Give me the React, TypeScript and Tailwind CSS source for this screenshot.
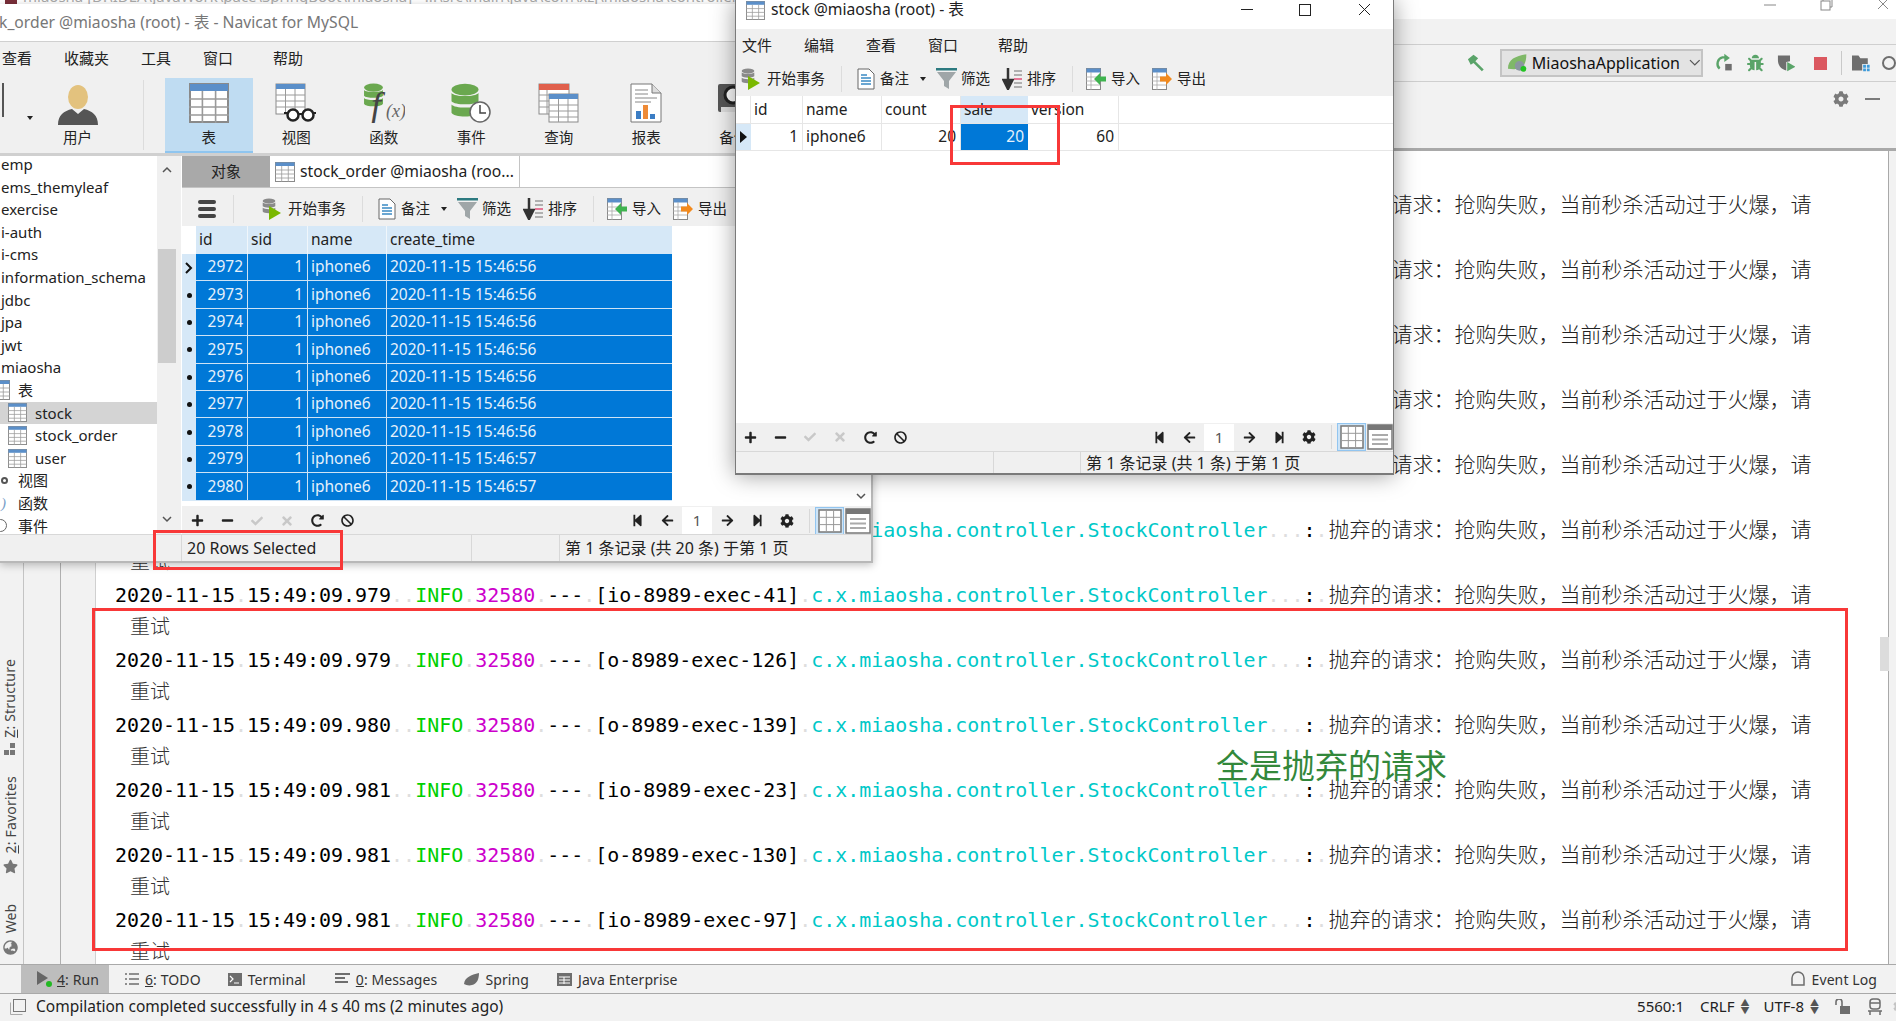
import React from "react";
import {
  FaPlus,
  FaMinus,
  FaCheck,
  FaTimes,
  FaRedoAlt,
  FaBan,
  FaStepBackward,
  FaStepForward,
  FaArrowLeft,
  FaArrowRight,
  FaCog,
  FaStar,
  FaGlobeAsia,
  FaBug,
} from "react-icons/fa";

const logs = [
  ["15:49:09.978", "[io-8989-exec-52]"],
  ["15:49:09.978", "[io-8989-exec-60]"],
  ["15:49:09.978", "[io-8989-exec-77]"],
  ["15:49:09.979", "[o-8989-exec-101]"],
  ["15:49:09.979", "[io-8989-exec-18]"],
  ["15:49:09.979", "[io-8989-exec-33]"],
  ["15:49:09.979", "[io-8989-exec-41]"],
  ["15:49:09.979", "[o-8989-exec-126]"],
  ["15:49:09.980", "[o-8989-exec-139]"],
  ["15:49:09.981", "[io-8989-exec-23]"],
  ["15:49:09.981", "[o-8989-exec-130]"],
  ["15:49:09.981", "[io-8989-exec-97]"],
];

const orders = [
  ["2972", "2020-11-15 15:46:56"],
  ["2973", "2020-11-15 15:46:56"],
  ["2974", "2020-11-15 15:46:56"],
  ["2975", "2020-11-15 15:46:56"],
  ["2976", "2020-11-15 15:46:56"],
  ["2977", "2020-11-15 15:46:56"],
  ["2978", "2020-11-15 15:46:56"],
  ["2979", "2020-11-15 15:46:57"],
  ["2980", "2020-11-15 15:46:57"],
];

const treeTop = ["emp", "ems_themyleaf", "exercise", "i-auth", "i-cms", "information_schema", "jdbc", "jpa", "jwt", "miaosha"];

function GridIcon({ size = 20, top = "#5b8fc9" }: { size?: number; top?: string }) {
  return (
    <svg width={size} height={size} viewBox="0 0 20 20" className="shrink-0">
      <rect x="0.5" y="0.5" width="19" height="19" fill="#fff" stroke="#8a8a8a" />
      <rect x="0.5" y="0.5" width="19" height="3.5" fill={top} />
      <path d="M0 8h20M0 12h20M0 16h20M6.7 4v16M13.3 4v16" stroke="#9a9a9a" strokeWidth="0.8" />
    </svg>
  );
}

function DbStack({ color = "#6aa84f" }: { color?: string }) {
  return (
    <g fill={color}>
      <ellipse cx="10" cy="4" rx="9" ry="3.5" />
      <path d="M1 6c2 2.5 16 2.5 18 0v5c-2 2.5-16 2.5-18 0zM1 13c2 2.5 16 2.5 18 0v5c-1 3-17 3-18 0z" />
    </g>
  );
}

function ViewIcon() {
  return (
    <svg width="42" height="40" viewBox="0 0 42 40">
      <rect x="1" y="1" width="29" height="30" fill="#fff" stroke="#8a8a8a" />
      <rect x="1" y="1" width="29" height="5" fill="#5b8fc9" />
      <path d="M1 12h29M1 18h29M1 24h29M10.500 6v25M20 6v25" stroke="#9a9a9a" />
      <circle cx="18" cy="32" r="5.5" fill="#fff" stroke="#222" strokeWidth="2.500" />
      <circle cx="33" cy="32" r="5.500" fill="#fff" stroke="#222" strokeWidth="2.500" />
      <path d="M23 31h5M9 30l4 0M38 30l3 0" stroke="#222" strokeWidth="2" />
    </svg>
  );
}

function FuncIcon() {
  return (
    <svg width="42" height="40" viewBox="0 0 42 40">
      <g transform="scale(1.05 1.15)">
        <DbStack />
      </g>
      <text x="8" y="34" fontFamily="'Liberation Serif', serif" fontStyle="italic" fontSize="36" fill="#444">f</text>
      <text x="23" y="34" fontFamily="'Liberation Serif', serif" fontStyle="italic" fontSize="18" fill="#666">(x)</text>
    </svg>
  );
}

function EventIcon() {
  return (
    <svg width="42" height="40" viewBox="0 0 42 40">
      <g transform="scale(1.5 1.65)">
        <DbStack />
      </g>
      <circle cx="30" cy="29" r="10" fill="#fff" stroke="#666" strokeWidth="1.500" />
      <path d="M30 22v8h6" fill="none" stroke="#444" strokeWidth="1.500" />
    </svg>
  );
}

function QueryIcon() {
  return (
    <svg width="42" height="40" viewBox="0 0 42 40">
      <rect x="1" y="1" width="30" height="30" fill="#fff" stroke="#8a8a8a" />
      <rect x="1" y="1" width="30" height="6" fill="#e0604c" />
      <path d="M1 12h12M1 18h12M1 24h12M9 7v24" stroke="#9a9a9a" />
      <rect x="11" y="11" width="29" height="28" fill="#fff" stroke="#8a8a8a" />
      <rect x="11" y="11" width="29" height="5" fill="#5b8fc9" />
      <path d="M11 22h29M11 28h29M11 34h29M20.500 16v23M30 16v23" stroke="#9a9a9a" />
    </svg>
  );
}

function ReportIcon() {
  return (
    <svg width="32" height="40" viewBox="0 0 32 40">
      <path d="M1 1h21l9 9v29H1z" fill="#fff" stroke="#777" />
      <path d="M22 1v9h9" fill="#ddd" stroke="#777" />
      <path d="M5 7h13M5 11h13M5 15h22M5 19h16" stroke="#888" />
      <rect x="6" y="28" width="5" height="8" fill="#3b7dc4" />
      <rect x="13" y="22" width="5" height="14" fill="#ee8a36" />
      <rect x="20" y="31" width="5" height="5" fill="#3b7dc4" />
    </svg>
  );
}

function UserIcon() {
  return (
    <svg width="42" height="42" viewBox="0 0 42 42">
      <ellipse cx="21" cy="12" rx="10" ry="12" fill="#e3c27e" />
      <path d="M1 40c0-10 6-14 14-16l6 5 6-5c8 2 14 6 14 16z" fill="#555" />
    </svg>
  );
}

function BackupIcon() {
  return (
    <svg width="34" height="34" viewBox="0 0 34 34">
      <rect x="1" y="1" width="30" height="28" rx="2" fill="#555" />
      <circle cx="16" cy="12" r="8" fill="#fff" stroke="#222" strokeWidth="3" />
      <rect x="4" y="24" width="26" height="5" fill="#ddd" />
    </svg>
  );
}

function BeginIcon() {
  return (
    <svg width="20" height="22" viewBox="0 0 20 22">
      <g transform="scale(0.7 0.75)">
        <DbStack color="#8a8a8a" />
      </g>
      <path d="M7 8l12 7-12 7z" fill="#7ab800" />
    </svg>
  );
}

function NoteIcon() {
  return (
    <svg width="18" height="22" viewBox="0 0 18 22">
      <path d="M1 1h11l5 5v15H1z" fill="#fff" stroke="#666" />
      <path d="M4 7h6M4 10h10M4 13h10M4 16h10" stroke="#3b8bc4" strokeWidth="1.400" />
    </svg>
  );
}

function FilterIcon() {
  return (
    <svg width="21" height="22" viewBox="0 0 21 22">
      <rect x="0" y="0" width="21" height="2.500" fill="#2c7a80" />
      <path d="M1 4h19l-7 9v8l-5-3v-5z" fill="#9fa6a8" />
    </svg>
  );
}

function SortIcon() {
  return (
    <svg width="21" height="22" viewBox="0 0 21 22">
      <path d="M6 0v14M1.500 12l4.500 9 4.500-9z" stroke="#333" strokeWidth="2.500" fill="#333" />
      <path d="M12 3h8M12 7h8" stroke="#9a9a9a" strokeWidth="1.500" />
      <path d="M12 11h8" stroke="#e0507a" strokeWidth="1.500" />
      <path d="M12 15h8M12 19h8" stroke="#9a9a9a" strokeWidth="1.500" />
    </svg>
  );
}

function ImportIcon({ arrow }: { arrow: string }) {
  return (
    <svg width="21" height="22" viewBox="0 0 21 22">
      <rect x="0.500" y="0.500" width="14" height="21" fill="#fff" stroke="#888" />
      <rect x="0.500" y="0.500" width="14" height="4" fill="#5b8fc9" />
      <path d="M0 9h14M0 13h14M0 17h14M5 4v18" stroke="#aaa" strokeWidth="0.800" />
      <path d={arrow === "#3fb34f" ? "M8 11l6-6v3.500h6v5h-6V17z" : "M20 11l-6-6v3.500H8v5h6V17z"} fill={arrow} />
    </svg>
  );
}

function FormIcon() {
  return (
    <svg width="26" height="26" viewBox="0 0 26 26">
      <rect x="1" y="1" width="24" height="24" fill="#fff" stroke="#777" strokeWidth="1.500" />
      <rect x="1" y="1" width="24" height="5" fill="#777" />
      <path d="M5 11h16M5 15.500h16M5 20h16" stroke="#aaa" strokeWidth="2" />
    </svg>
  );
}

function GridBtn() {
  return (
    <div className="flex h-[28px] w-[29px] items-center justify-center border border-[#92c5f0] bg-[#cde4f7]">
      <svg width="24" height="24" viewBox="0 0 24 24">
        <rect x="1" y="1" width="22" height="22" fill="#fff" stroke="#777" strokeWidth="1.500" />
        <path d="M1 8.300h22M1 15.600h22M8.300 1v22M15.600 1v22" stroke="#999" />
      </svg>
    </div>
  );
}

function Menu({ items, className }: { items: string[]; className: string }) {
  return (
    <div className={`flex items-center gap-[32px] bg-[#f0f0f0] text-[15px] text-[#222] ${className}`}>
      {items.map((m, i) => (
        <span key={m} className={i === items.length - 1 ? "ml-[8px]" : ""}>
          {m}
        </span>
      ))}
    </div>
  );
}

function DataToolbar({ className, children }: { className: string; children?: React.ReactNode }) {
  return (
    <div className={`flex items-center bg-[#f0f0f0] text-[14.500px] text-[#222] ${className}`}>
      {children}
      <div className="flex w-[116px] items-center gap-[6px]">
        <BeginIcon />
        <span>开始事务</span>
        <span className="ml-auto mr-[15px] h-[26px] w-px bg-[#dcdcdc]" />
      </div>
      <div className="flex w-[79px] items-center gap-[5px]">
        <NoteIcon />
        <span>备注</span>
        <span className="ml-[6px] h-0 w-0 border-x-[3.500px] border-t-[4px] border-x-transparent border-t-[#222]" />
      </div>
      <div className="flex w-[66px] items-center gap-[4px]">
        <FilterIcon />
        <span>筛选</span>
      </div>
      <div className="flex w-[84px] items-center gap-[4px]">
        <SortIcon />
        <span>排序</span>
        <span className="ml-auto mr-[13px] h-[26px] w-px bg-[#dcdcdc]" />
      </div>
      <div className="flex w-[66px] items-center gap-[4px]">
        <ImportIcon arrow="#3fb34f" />
        <span>导入</span>
      </div>
      <div className="flex items-center gap-[4px]">
        <ImportIcon arrow="#f28a1e" />
        <span>导出</span>
      </div>
    </div>
  );
}

function RecordBar({ className }: { className: string }) {
  const cell = "flex w-[30px] items-center justify-center";
  return (
    <div className={`flex items-center justify-between bg-[#f0f0f0] text-[14px] text-[#222] ${className}`}>
      <div className="-ml-[1px] flex">
        <span className={cell}><FaPlus size={13} /></span>
        <span className={cell}><FaMinus size={13} /></span>
        <span className={cell}><FaCheck size={12} className="text-[#c8c8c8]" /></span>
        <span className={cell}><FaTimes size={14} className="text-[#c8c8c8]" /></span>
        <span className={cell}><FaRedoAlt size={13} /></span>
        <span className={cell}><FaBan size={13} /></span>
      </div>
      <div className="flex items-center">
        <span className={cell}><FaStepBackward size={13} /></span>
        <span className={cell}><FaArrowLeft size={13} /></span>
        <span className="flex h-[27px] w-[30px] items-center justify-center bg-white text-[15px] text-[#555]">1</span>
        <span className={cell}><FaArrowRight size={13} /></span>
        <span className={cell}><FaStepForward size={13} /></span>
        <span className={cell}><FaCog size={14} /></span>
        <span className="ml-[7px] mr-[5px] h-[24px] w-px bg-[#d8d8d8]" />
        <GridBtn />
        <span className="flex w-[27px] justify-center"><FormIcon /></span>
      </div>
    </div>
  );
}

function LogRow({ time, thread }: { time: string; thread: string }) {
  const dot = "text-[#dedede]";
  return (
    <div className="shrink-0">
      <div className="h-[32.500px] whitespace-pre leading-[32.500px] text-black">
        2020-11-15<span className={dot}>.</span>
        {time}
        <span className={dot}>..</span>
        <span className="text-[#00d000]">INFO</span>
        <span className={dot}>.</span>
        <span className="text-[#cc00cc]">32580</span>
        <span className={dot}>.</span>
        ---
        <span className={dot}>.</span>
        {thread}
        <span className={dot}>.</span>
        <span className="text-[#00c8c8]">c.x.miaosha.controller.StockController</span>
        <span className={dot}>...</span>
        :<span className={dot}>.</span>
        <span className="ml-[1px] font-['Noto_Sans_CJK_SC',sans-serif] text-[21px] font-light text-[#222]">抛弃的请求：抢购失败，当前秒杀活动过于火爆，请</span>
      </div>
      <div className="h-[32.500px] pl-[15px] font-['Noto_Sans_CJK_SC',sans-serif] text-[20px] font-light leading-[32.500px] text-[#333]">重试</div>
    </div>
  );
}

function VTab({ label, children, className }: { label: React.ReactNode; children: React.ReactNode; className: string }) {
  return (
    <div className={`flex flex-col items-center gap-[5px] text-[#444] ${className}`}>
      <span className="text-[14px] leading-none tracking-[0.2px] [writing-mode:vertical-rl] rotate-180">{label}</span>
      {children}
    </div>
  );
}

function BottomTab({ icon, label, className = "" }: { icon: React.ReactNode; label: React.ReactNode; className?: string }) {
  return (
    <div className={`flex items-center gap-[6px] ${className}`}>
      {icon}
      <span>{label}</span>
    </div>
  );
}

export default function App() {
  return (
    <div className="relative flex h-[1021px] w-[1896px] flex-col overflow-hidden bg-white font-['Noto_Sans','Noto_Sans_CJK_SC',sans-serif]">
      {/* IDE chrome */}
      <div className="flex h-[19px] items-center overflow-hidden bg-white pr-[5px] text-[#777]">
        <div className="ml-[5px] -mt-[24px] h-[12px] w-[12px] shrink-0 bg-[#7a2f3a]" />
        <span className="ml-[6px] -mt-[26px] whitespace-nowrap text-[15px] text-[#aaa]">
          miaosha [D:\IDEA\JavaWork\pace\SpringBoot\miaosha] - ...\src\main\java\com\xzj\miaosha\controller
        </span>
        <svg width="130" height="12" viewBox="0 0 130 12" className="ml-auto -mt-[10px] shrink-0">
          <path d="M3 6h12" stroke="#888" />
          <rect x="60" y="2" width="9" height="9" fill="none" stroke="#888" />
          <path d="M62 2V0h9v8h-2" fill="none" stroke="#888" />
          <path d="M117 0l10 10M127 0l-10 10" stroke="#888" />
        </svg>
      </div>
      <div className="h-[26px] border-b border-[#cfcfcf] bg-[#f2f2f2]" />
      <div className="flex h-[37px] items-center border-b border-[#cfcfcf] bg-[#f2f2f2] pl-[1467px] text-[16px] text-[#111]">
        <svg width="20" height="20" viewBox="0 0 20 20">
          <path d="M1 6l6-5 5 4-3 3 9 9-2 2-9-9-3 2z" fill="#5aa469" />
        </svg>
        <div className="ml-[14px] flex h-[28px] w-[203px] items-center border-2 border-[#c4c4c4] bg-[#e3e3e3] pl-[5px]">
          <svg width="22" height="20" viewBox="0 0 22 20">
            <path d="M1 16C1 6 9 3 20 1c0 8-2 14-9 15-4 1-7 0-10 0z" fill="#7fb868" />
            <circle cx="13" cy="13" r="5" fill="#8a96a0" />
            <circle cx="17" cy="16" r="3" fill="#22c322" />
          </svg>
          <span className="ml-[4px]">MiaoshaApplication</span>
          <svg width="12" height="8" viewBox="0 0 12 8" className="ml-[9px]">
            <path d="M1 1l5 5 5-5" fill="none" stroke="#555" strokeWidth="1.300" />
          </svg>
        </div>
        <svg width="20" height="20" viewBox="0 0 20 20" className="ml-[12px]">
          <path d="M5 16a7 7 0 0 1 3-12h3" fill="none" stroke="#5aa469" strokeWidth="2.500" />
          <path d="M10 0l6 4.500-6 4.500z" fill="#5aa469" />
          <rect x="11" y="11" width="7" height="7" fill="#6e6e6e" />
        </svg>
        <FaBug size={18} className="ml-[14px] text-[#5aa469]" />
        <svg width="20" height="20" viewBox="0 0 20 20" className="ml-[13px]">
          <path d="M1 2h13v6l-4 1v9C5 17 1 13 1 7z" fill="#6e6e6e" />
          <path d="M11 9l9 5-9 5z" fill="#5aa469" />
        </svg>
        <div className="ml-[19px] h-[13px] w-[13px] bg-[#db5860]" />
        <div className="ml-[14px] h-[24px] w-px bg-[#c9c9c9]" />
        <svg width="20" height="18" viewBox="0 0 20 18" className="ml-[11px]">
          <path d="M0 1h7l2 3h8v6h-6v7H0z" fill="#6e6e6e" />
          <path d="M12 11h3v3h-3zM16 11h3v3h-3zM12 15h3v3h-3zM16 15h3v3h-3z" fill="#3d9ad9" />
        </svg>
        <div className="ml-[11px] h-[14px] w-[14px] shrink-0 rounded-full border-2 border-[#6e6e6e]" />
      </div>
      <div className="flex h-[68px] items-start justify-end border-b-2 border-[#a9a9a9] bg-[#f2f2f2] pr-[16px] pt-[9px]">
        <FaCog size={16} className="text-[#7b7b7b]" />
        <div className="ml-[16px] mt-[7px] h-[2px] w-[15px] bg-[#7b7b7b]" />
      </div>

      {/* run console */}
      <div className="flex min-h-0 flex-1 border-t border-[#a9a9a9]">
        <div className="relative w-[24px] shrink-0 border-r border-[#c4c4c4] bg-[#f2f2f2]">
          <div className="absolute bottom-[9px] left-[3px] flex flex-col-reverse items-center gap-[7px]">
            <FaGlobeAsia size={15} className="text-[#777]" />
            <span className="text-[14px] leading-none text-[#444] [writing-mode:vertical-rl] rotate-180">Web</span>
          </div>
          <VTab label={<><u>2</u>: Favorites</>} className="absolute bottom-[90px] left-[3px]">
            <FaStar size={15} className="text-[#777]" />
          </VTab>
          <VTab label={<><u>Z</u>: Structure</>} className="absolute bottom-[208px] left-[3px]">
            <svg width="14" height="13" viewBox="0 0 14 13">
              <path d="M7 0h5v5H7zM1 7h5v5H1zM7 7h5v5H7z" fill="#777" />
            </svg>
          </VTab>
        </div>
        <div className="w-[37px] shrink-0 border-r border-[#b0b0b0] bg-[#f2f2f2]" />
        <div className="w-[35px] shrink-0 border-r border-[#d0d0d0] bg-[#f2f2f2]" />
        <div className="flex min-w-0 flex-1 flex-col overflow-hidden pl-[19px] pt-[36px] font-['DejaVu_Sans_Mono',monospace] text-[19.950px]">
          {logs.map((l, i) => (
            <LogRow key={i} time={l[0]} thread={l[1]} />
          ))}
        </div>
        <div className="relative w-[8px] shrink-0 border-l border-[#a9a9a9] bg-[#f2f2f2]">
          <div className="absolute -left-[9px] top-[486px] h-[34px] w-[9px] bg-[#dcdcdc]" />
        </div>
      </div>

      {/* tool window bar */}
      <div className="flex h-[29px] items-center border-t border-[#a9a9a9] bg-[#f2f2f2] pl-[21px] text-[14px] tracking-[0.1px] text-[#333]">
        <div className="flex h-full w-[88px] items-center bg-[#bdbdbd] pl-[14px]">
          <svg width="20" height="18" viewBox="0 0 20 18">
            <path d="M2 1l11 7-11 7z" fill="#666" />
            <circle cx="14" cy="14" r="3" fill="#22b822" />
          </svg>
          <span className="ml-[2px]"><u>4</u>: Run</span>
        </div>
        <BottomTab
          className="ml-[16px]"
          label={<><u>6</u>: TODO</>}
          icon={
            <svg width="14" height="12" viewBox="0 0 14 12">
              <path d="M0 1h2M4 1h10M0 6h2M4 6h10M0 11h2M4 11h10" stroke="#6e6e6e" strokeWidth="1.500" />
            </svg>
          }
        />
        <BottomTab
          className="ml-[27px]"
          label="Terminal"
          icon={
            <svg width="14" height="13" viewBox="0 0 14 13">
              <rect width="14" height="13" fill="#6e6e6e" />
              <path d="M2 3l3 3-3 3M6 10h5" fill="none" stroke="#fff" strokeWidth="1.200" />
            </svg>
          }
        />
        <BottomTab
          className="ml-[29px]"
          label={<><u>0</u>: Messages</>}
          icon={
            <svg width="15" height="12" viewBox="0 0 15 12">
              <path d="M0 1h15M0 5h10M0 9h13" stroke="#6e6e6e" strokeWidth="2" />
            </svg>
          }
        />
        <BottomTab
          className="ml-[27px]"
          label="Spring"
          icon={
            <svg width="15" height="13" viewBox="0 0 15 13">
              <path d="M0 11C1 4 7 2 15 0c0 6-2 11-7 12-3 1-6 0-8-1z" fill="#6e6e6e" />
            </svg>
          }
        />
        <BottomTab
          className="ml-[28px]"
          label="Java Enterprise"
          icon={
            <svg width="15" height="13" viewBox="0 0 15 13">
              <rect width="15" height="13" fill="#6e6e6e" />
              <path d="M2 4h11M2 7h11M2 10h11M7 4v7" stroke="#fff" />
            </svg>
          }
        />
        <BottomTab
          className="ml-auto mr-[19px]"
          label="Event Log"
          icon={
            <svg width="16" height="16" viewBox="0 0 16 16">
              <path d="M2 14V7a6 6 0 0 1 12 0v7z" fill="none" stroke="#6e6e6e" strokeWidth="1.500" />
            </svg>
          }
        />
      </div>

      {/* status bar */}
      <div className="flex h-[28px] items-center border-t border-[#a9a9a9] bg-[#f2f2f2] pb-[2px] pl-[10px] text-[15.500px] text-[#222]">
        <svg width="16" height="16" viewBox="0 0 16 16">
          <rect x="3.500" y="0.500" width="12" height="12" fill="#f2f2f2" stroke="#777" />
          <path d="M0.500 3.500v12h12" fill="none" stroke="#aaa" />
        </svg>
        <span className="ml-[10px]">Compilation completed successfully in 4 s 40 ms (2 minutes ago)</span>
        <span className="ml-auto text-[15px]">5560:1</span>
        <span className="ml-[16px] text-[15px]">CRLF</span>
        <span className="ml-[6px] text-[9px] leading-[8px] text-[#555]">▲<br />▼</span>
        <span className="ml-[14px] text-[15px]">UTF-8</span>
        <span className="ml-[6px] text-[9px] leading-[8px] text-[#555]">▲<br />▼</span>
        <svg width="15" height="15" viewBox="0 0 15 15" className="ml-[16px]">
          <rect x="5" y="7" width="10" height="8" fill="#6e6e6e" />
          <path d="M1 6V3a3 3 0 0 1 6 0v4" fill="none" stroke="#6e6e6e" strokeWidth="1.600" />
        </svg>
        <svg width="16" height="18" viewBox="0 0 16 18" className="ml-[17px]">
          <rect x="3" y="1" width="10" height="10" rx="3" fill="none" stroke="#6e6e6e" strokeWidth="1.500" />
          <path d="M3 5h10M1 13h14M3 13v4M13 13v4" stroke="#6e6e6e" strokeWidth="1.500" />
        </svg>
        <FaCog size={13} className="-mr-[10px] ml-[10px] shrink-0 text-[#c4c4c4]" />
      </div>

      {/* navicat main window */}
      <div className="absolute left-0 top-[4px] flex h-[559px] w-[873px] flex-col overflow-hidden border-b-2 border-r-2 border-[#b8b8b8] bg-white shadow-[0_2px_8px_rgba(0,0,0,0.25)]">
        <div className="flex h-[38px] shrink-0 items-center whitespace-nowrap border-b border-[#d0d0d0] text-[15.700px] text-[#777]">
          <span className="-ml-[1px]">k_order @miaosha (root) - 表 - Navicat for MySQL</span>
        </div>
        <Menu items={["查看", "收藏夹", "工具", "窗口", "帮助"]} className="h-[36px] shrink-0 pb-[3px] pl-[2px]" />
        <div className="flex h-[75px] shrink-0 bg-[#f0f0f0] text-[14.500px] text-[#222]">
          <div className="mt-[5px] h-[34px] w-[4px] shrink-0 border-r-2 border-[#555]" />
          <div className="mt-[38px] ml-[23px] h-0 w-0 shrink-0 border-x-[3.500px] border-t-[4px] border-x-transparent border-t-[#222]" />
          <div className="ml-[1px] flex w-[87px] shrink-0 flex-col items-center pt-[5px]">
            <div className="flex h-[44px] items-end"><UserIcon /></div>
            <span>用户</span>
          </div>
          <div className="ml-[22px] mr-[21px] mt-[2px] h-[70px] w-px shrink-0 bg-[#dcdcdc]" />
          <div className="flex w-[87.500px] shrink-0 flex-col items-center border-b-2 border-[#8fc5ef] bg-[#bfdcf2] pt-[5px]">
            <div className="flex h-[44px] items-start"><GridIcon size={40} /></div>
            <span>表</span>
          </div>
          {[
            { label: "视图", icon: <ViewIcon /> },
            { label: "函数", icon: <FuncIcon /> },
            { label: "事件", icon: <EventIcon /> },
            { label: "查询", icon: <QueryIcon /> },
            { label: "报表", icon: <ReportIcon /> },
            { label: "备份", icon: <BackupIcon /> },
          ].map((t) => (
            <div key={t.label} className="flex w-[87.500px] shrink-0 flex-col items-center pt-[5px]">
              <div className="flex h-[44px] items-start">{t.icon}</div>
              <span>{t.label}</span>
            </div>
          ))}
        </div>
        <div className="h-[3px] shrink-0 bg-[#d0d0d0]" />

        <div className="flex min-h-0 flex-1">
          <div className="-mt-[3px] flex w-[157px] shrink-0 flex-col text-[15px] leading-[22.600px] text-[#222]">
            {treeTop.map((t) => (
              <div key={t} className="h-[22.600px] shrink-0 pl-[1px]">{t}</div>
            ))}
            <div className="flex h-[22.600px] shrink-0 items-center gap-[8px]">
              <div className="-ml-[10px]"><GridIcon size={20} /></div>
              <span>表</span>
            </div>
            {["stock", "stock_order", "user"].map((t) => (
              <div key={t} className={`flex h-[22.600px] shrink-0 items-center gap-[8px] pl-[8px] ${t === "stock" ? "bg-[#d4d4d4]" : ""}`}>
                <GridIcon size={19} />
                <span>{t}</span>
              </div>
            ))}
            <div className="flex h-[22.600px] shrink-0 items-center pl-[1px]">
              <div className="h-[7px] w-[7px] rounded-full border-2 border-[#555]" />
              <span className="ml-[10px]">视图</span>
            </div>
            <div className="flex h-[22.600px] shrink-0 items-center pl-[1px]">
              <span className="w-[7px] font-['Liberation_Serif',serif] italic text-[#7aa0c8]">)</span>
              <span className="ml-[10px]">函数</span>
            </div>
            <div className="flex h-[22.600px] shrink-0 items-center">
              <div className="-ml-[6px] h-[13px] w-[13px] rounded-full border border-[#666] bg-white" />
              <span className="ml-[11px]">事件</span>
            </div>
          </div>
          <div className="flex w-[24px] shrink-0 flex-col items-center bg-[#f0f0f0] pr-[5px] pt-[10px] text-[#555]">
            <svg width="10" height="7" viewBox="0 0 10 7">
              <path d="M1 6l4-4 4 4" fill="none" stroke="#555" strokeWidth="1.500" />
            </svg>
            <div className="mt-[76px] h-[114px] w-[18px] bg-[#cdcdcd]" />
            <svg width="10" height="7" viewBox="0 0 10 7" className="mt-[153px]">
              <path d="M1 1l4 4 4-4" fill="none" stroke="#555" strokeWidth="1.500" />
            </svg>
          </div>

          <div className="flex min-w-0 flex-1 flex-col pl-[1px]">
            <div className="flex h-[32px] shrink-0 border-b border-[#c4c4c4] text-[15px] text-[#222]">
              <div className="flex w-[88px] items-center justify-center bg-[#a9a9a9]">对象</div>
              <div className="flex w-[250px] items-center gap-[5px] border-r border-[#c4c4c4] bg-white pl-[5px]">
                <GridIcon size={20} />
                <span className="whitespace-nowrap text-[15.700px]">stock_order @miaosha (roo...</span>
              </div>
            </div>
            <DataToolbar className="h-[38px] shrink-0 pt-[3px] pl-[16px]">
              <div className="flex h-[18px] w-[18px] shrink-0 flex-col justify-between">
                <span className="h-[4px] rounded-full bg-[#444]" />
                <span className="h-[4px] rounded-full bg-[#444]" />
                <span className="h-[4px] rounded-full bg-[#444]" />
              </div>
              <span className="ml-[17px] mr-[28px] h-[28px] w-px bg-[#dcdcdc]" />
            </DataToolbar>
            <div className="relative min-h-0 flex-1 bg-white text-[15.500px] leading-none">
              <div className="flex h-[28px] w-[490px] bg-[#d6e8f7] text-[#222]">
                <div className="w-[14px] bg-white" />
                <div className="flex w-[52px] items-center border-r border-[#f0f6fb] pl-[3px]">id</div>
                <div className="flex w-[60px] items-center border-r border-[#f0f6fb] pl-[3px]">sid</div>
                <div className="flex w-[79px] items-center border-r border-[#f0f6fb] pl-[3px]">name</div>
                <div className="flex flex-1 items-center pl-[3px]">create_time</div>
              </div>
              {orders.map((o, i) => (
                <div key={o[0]} className="flex h-[27.400px] w-[490px]">
                  <div className="flex w-[14px] items-center justify-center bg-[#d6e8f7] text-[#111]">
                    {i === 0 ? (
                      <svg width="8" height="12" viewBox="0 0 8 12">
                        <path d="M1 1l5 5-5 5" fill="none" stroke="#111" strokeWidth="2" />
                      </svg>
                    ) : (
                      <div className="h-[5px] w-[5px] rounded-full bg-[#111]" />
                    )}
                  </div>
                  <div className="flex flex-1 border-b border-[#cfe3f5] bg-[#0078d7] text-[#e6f1fb]">
                    <div className="flex w-[52px] items-center justify-end border-r border-[#cfe3f5] pr-[4px]">{o[0]}</div>
                    <div className="flex w-[60px] items-center justify-end border-r border-[#cfe3f5] pr-[4px]">1</div>
                    <div className="flex w-[79px] items-center border-r border-[#cfe3f5] pl-[3px]">iphone6</div>
                    <div className="flex flex-1 items-center pl-[3px]">{o[1]}</div>
                  </div>
                </div>
              ))}
              <svg width="10" height="7" viewBox="0 0 10 7" className="absolute bottom-[6px] right-[5px]">
                <path d="M1 1l4 4 4-4" fill="none" stroke="#555" strokeWidth="1.500" />
              </svg>
            </div>
            <RecordBar className="h-[28px] shrink-0 pl-[1px] pt-[1px]" />
          </div>
        </div>
        <div className="flex h-[27px] shrink-0 items-center border-t border-[#d8d8d8] bg-[#f0f0f0] text-[16px] text-[#222]">
          <div className="w-[182px] border-r border-[#d8d8d8] self-stretch" />
          <div className="flex w-[290px] items-center self-stretch border-r border-[#d8d8d8] pl-[5px]">20 Rows Selected</div>
          <div className="w-[88px] self-stretch border-r border-[#d8d8d8]" />
          <span className="ml-[5px]">第 1 条记录 (共 20 条) 于第 1 页</span>
        </div>
      </div>

      {/* stock window */}
      <div className="absolute left-[735px] top-0 flex h-[475px] w-[659px] flex-col overflow-hidden border-x border-b-2 border-[#7a7a7a] bg-white shadow-[0_0_22px_rgba(0,0,0,0.4)]">
        <div className="flex h-[29px] shrink-0 items-center pb-[9px] text-[15.700px] text-[#222]">
          <div className="ml-[10px]"><GridIcon size={19} /></div>
          <span className="ml-[6px]">stock @miaosha (root) - 表</span>
          <svg width="130" height="14" viewBox="0 0 130 14" className="ml-auto mr-[22px]">
            <path d="M0 6.500h12" stroke="#222" />
            <rect x="58.500" y="1.500" width="11" height="11" fill="none" stroke="#222" />
            <path d="M118 1l11 11M129 1l-11 11" stroke="#222" />
          </svg>
        </div>
        <Menu items={["文件", "编辑", "查看", "窗口", "帮助"]} className="h-[33px] shrink-0 pl-[6px]" />
        <DataToolbar className="h-[34px] shrink-0 pl-[5px]" />
        <div className="min-h-0 flex-1 text-[15.500px] leading-none text-[#222]">
          <div className="flex h-[28px] border-b border-[#e6e6e6]">
            <div className="w-[15px] border-r border-[#e6e6e6]" />
            <div className="flex w-[52px] items-center border-r border-[#e6e6e6] pl-[3px]">id</div>
            <div className="flex w-[79px] items-center border-r border-[#e6e6e6] pl-[3px]">name</div>
            <div className="flex w-[79px] items-center border-r border-[#e6e6e6] pl-[3px]">count</div>
            <div className="flex w-[67px] items-center bg-[#d6e8f7] pl-[3px]">sale</div>
            <div className="flex w-[91px] items-center border-r border-[#e6e6e6] pl-[3px]">version</div>
          </div>
          <div className="flex h-[27px] border-b border-[#e6e6e6]">
            <div className="flex w-[15px] items-center justify-center bg-[#d6e8f7]">
              <div className="h-0 w-0 border-y-[6px] border-l-[7px] border-y-transparent border-l-[#111]" />
            </div>
            <div className="flex w-[52px] items-center justify-end border-r border-[#e6e6e6] pr-[4px]">1</div>
            <div className="flex w-[79px] items-center border-r border-[#e6e6e6] pl-[3px]">iphone6</div>
            <div className="flex w-[79px] items-center justify-end border-r border-[#e6e6e6] pr-[4px]">20</div>
            <div className="flex w-[67px] items-center justify-end bg-[#0078d7] pr-[4px] text-[#e6f1fb]">20</div>
            <div className="flex w-[91px] items-center justify-end border-r border-[#e6e6e6] pr-[4px]">60</div>
          </div>
        </div>
        <RecordBar className="h-[28px] shrink-0" />
        <div className="flex h-[22px] shrink-0 items-center border-t border-[#d8d8d8] bg-[#f0f0f0] text-[16px] text-[#222]">
          <div className="w-[258px] self-stretch border-r border-[#d8d8d8]" />
          <div className="w-[87px] self-stretch border-r border-[#d8d8d8]" />
          <span className="ml-[5px]">第 1 条记录 (共 1 条) 于第 1 页</span>
        </div>
      </div>

      {/* annotations */}
      <div className="absolute left-[950px] top-[105px] h-[60px] w-[110px] border-[3px] border-[#f83838]" />
      <div className="absolute left-[153px] top-[530px] h-[40px] w-[190px] border-[3px] border-[#f83838]" />
      <div className="absolute left-[92px] top-[608px] h-[343px] w-[1756px] border-[3px] border-[#f83838]" />
      <div className="absolute left-[1216px] top-[745px] text-[33px] leading-[42px] text-[#33883b]">全是抛弃的请求</div>
    </div>
  );
}
